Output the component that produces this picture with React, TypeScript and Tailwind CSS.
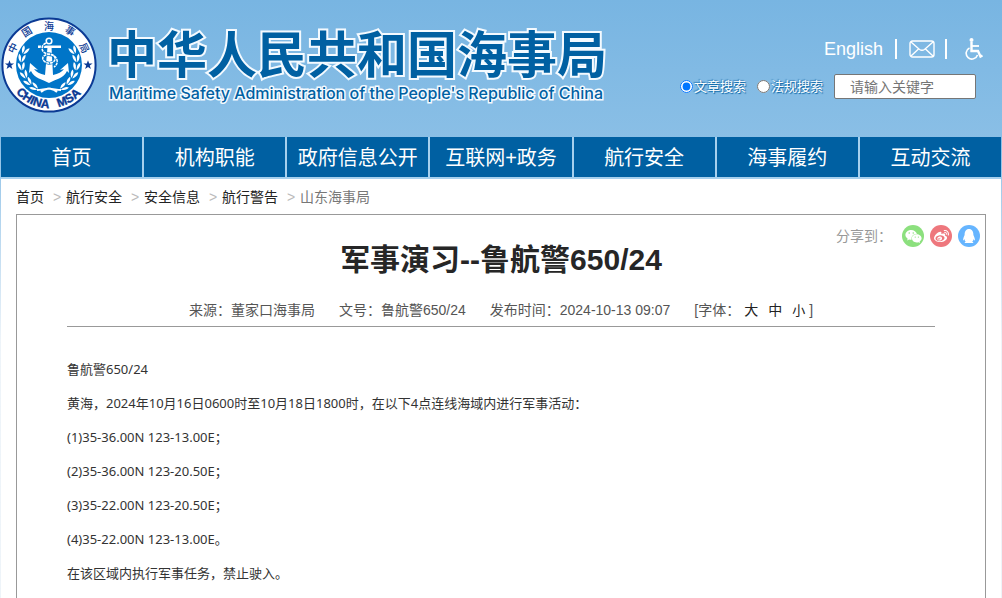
import React, { useState } from 'react';
import { FaQq, FaWeibo, FaWeixin } from 'react-icons/fa';

const navItems = ['首页', '机构职能', '政府信息公开', '互联网+政务', '航行安全', '海事履约', '互动交流'];

const crumbs = ['首页', '航行安全', '安全信息', '航行警告'];

const paragraphs = [
  '鲁航警650/24',
  '黄海，2024年10月16日0600时至10月18日1800时，在以下4点连线海域内进行军事活动：',
  '(1)35-36.00N 123-13.00E；',
  '(2)35-36.00N 123-20.50E；',
  '(3)35-22.00N 123-20.50E；',
  '(4)35-22.00N 123-13.00E。',
  '在该区域内执行军事任务，禁止驶入。',
];

const ringChars = [
  { char: '中', x: 12, y: 31, angle: -64 },
  { char: '国', x: 26, y: 15, angle: -32 },
  { char: '海', x: 48, y: 9, angle: 0 },
  { char: '事', x: 69, y: 14, angle: 32 },
  { char: '局', x: 83, y: 31, angle: 64 },
];

// leaves of one laurel branch, bottom to top
const leaves = [
  { x: 34, y: 70, angle: 32 },
  { x: 28, y: 65, angle: 48 },
  { x: 24, y: 58, angle: 64 },
  { x: 21, y: 50, angle: 82 },
  { x: 21, y: 42, angle: 100 },
  { x: 24, y: 34, angle: 118 },
];

const star = 'M0-4.8 1.2-1.5 4.6-1.5 1.8.6 2.9 3.9 0 1.9-2.9 3.9-1.8.6-4.6-1.5-1.2-1.5Z';

const Branch: React.FC = () => (
  <g fill="#fff">
    {leaves.map(leaf => (
      <g key={leaf.y} transform={`translate(${leaf.x} ${leaf.y}) rotate(${leaf.angle}) scale(.85)`}>
        <path d="M4 0C1-3.8-3-4-5.500-3.200-4-.4-1 .2 4 0Z" />
        <path d="M4 1C1 4.800-3 5-5.500 4.200-4 1.400-1 .8 4 1Z" />
      </g>
    ))}
  </g>
);

const Emblem: React.FC = () => (
  <svg viewBox="0 0 96 96" className="w-24 h-24 shrink-0" role="img" aria-label="中国海事局">
    <circle cx="48" cy="48" r="46.6" fill="#fff" stroke="#0b3a94" strokeWidth="2" />
    <circle cx="48" cy="48" r="33" fill="#0075c8" />
    <Branch />
    <g transform="translate(96 0) scale(-1 1)">
      <Branch />
    </g>
    {/* anchor */}
    <circle cx="48" cy="24" r="2.8" fill="none" stroke="#fff" strokeWidth="1.6" />
    <path d="M37 28.500H60V31H37Z" fill="#fff" />
    <path d="M46.500 30H50.500L52 58C57 57 61 55 63 52L59 53 67 46 68 56 66 54C62 62 55 62 48 66 41 62 34 62 30 54L28 56 29 46 37 53 33 52C35 55 39 57 44 58Z" fill="#fff" />
    <path
      d="M45 26C40 28 40 34 44 36S53 36 54 41 47 48 43 44 45 36 51 38 58 47 53 50"
      fill="none"
      stroke="#0075c8"
      strokeWidth="3"
    />
    <path
      d="M45 26C40 28 40 34 44 36S53 36 54 41 47 48 43 44 45 36 51 38 58 47 53 50"
      fill="none"
      stroke="#fff"
      strokeWidth="1.5"
      strokeDasharray="3 .7"
    />
    <path d="M36 73C43 73 50 69 56 75M60 73C53 73 46 69 40 75" fill="none" stroke="#fff" strokeWidth="1.8" />
    <g fill="#0b3a94">
      <path d={star} transform="translate(8.500 48)" />
      <path d={star} transform="translate(87 48)" />
      {ringChars.map(item => (
        <text
          key={item.char}
          transform={`translate(${item.x} ${item.y}) rotate(${item.angle})`}
          textAnchor="middle"
          dy="3.500"
          className="text-[10px] font-medium font-['Noto_Sans_CJK_SC',sans-serif]"
        >
          {item.char}
        </text>
      ))}
      <path id="emblem-arc" d="M5 48A43 43 0 0 0 91 48" fill="none" />
      <g
        className="text-[12px] font-bold font-['Liberation_Sans',sans-serif]"
        textAnchor="middle"
        stroke="#0b3a94"
        strokeWidth="0.4"
      >
        <text><textPath href="#emblem-arc" startOffset="36%">CHINA</textPath></text>
        <text><textPath href="#emblem-arc" startOffset="67%">MSA</textPath></text>
      </g>
    </g>
  </svg>
);

const MailIcon: React.FC = () => (
  <svg viewBox="0 0 26 18" className="w-[26px] h-[18px]" fill="none" stroke="#fff" strokeWidth="1.4">
    <rect x="1" y="1" width="24" height="16" rx="2.5" />
    <path d="M2 2 10.500 9.500Q13 11 15.500 9.500L24 2M2 16 9.500 9M24 16 16.500 9" />
  </svg>
);

const WheelchairIcon: React.FC = () => (
  <svg viewBox="0 0 18 22" className="w-[18px] h-[22px]" fill="none" stroke="#fff">
    <circle cx="6.500" cy="2" r="2" fill="#fff" stroke="none" />
    <path d="M6.500 4V13H13L15.500 18.500 17.500 17.500" strokeWidth="2.4" />
    <path d="M7 8H14" strokeWidth="1.8" />
    <path d="M4.500 10A5.800 5.800 0 1 0 12.500 17" strokeWidth="1.6" />
  </svg>
);

const SiteHeader: React.FC = () => {
  const [scope, setScope] = useState<string>('article');
  const scopes = [
    { id: 'article', label: '文章搜索' },
    { id: 'law', label: '法规搜索' },
  ];

  return (
    <header className="flex justify-between pt-[17px] pb-6">
      <div className="flex">
        <Emblem />
        <div className="ml-2.5 pt-3 text-[#0060a2] whitespace-nowrap">
          <h1 className="text-[50px] leading-[54px] font-bold [-webkit-text-stroke:4px_#f4faff] [paint-order:stroke_fill]">
            中华人民共和国海事局
          </h1>
          <p className="pl-0.5 text-base leading-5 font-medium font-['Inter','Liberation_Sans',sans-serif] [-webkit-text-stroke:3px_#f4faff] [paint-order:stroke_fill]">
            Maritime Safety Administration of the People's Republic of China
          </p>
        </div>
      </div>

      <div className="flex flex-col items-end gap-[13px] pt-5">
        <div className="flex items-center h-6 pr-[18px] text-white">
          <a href="#english" className="text-lg leading-6 font-['Liberation_Sans',sans-serif]">English</a>
          <span className="w-0.5 h-5 ml-3 mr-3 bg-white" />
          <a href="#mail" aria-label="邮箱"><MailIcon /></a>
          <span className="w-0.5 h-5 ml-2.5 mr-[18px] bg-white" />
          <a href="#accessibility" aria-label="无障碍"><WheelchairIcon /></a>
        </div>

        <form className="flex items-center pr-[25px]" onSubmit={e => e.preventDefault()}>
          {scopes.map(item => (
            <label
              key={item.id}
              className="flex items-center gap-px mr-[11px] text-[13px] leading-6 text-white [text-shadow:1px_1px_1px_#0060a2,-1px_-1px_1px_#3d86bd]"
            >
              <input
                type="radio"
                name="scope"
                className="w-[13px] h-[13px]"
                checked={scope === item.id}
                onChange={() => setScope(item.id)}
              />
              {item.label}
            </label>
          ))}
          <input
            type="text"
            aria-label="请输入关键字"
            placeholder="请输入关键字"
            className="w-[142px] h-[25px] px-[15px] bg-white border border-[#767676] rounded-xs text-sm placeholder:text-[#757575]"
          />
        </form>
      </div>
    </header>
  );
};

const ShareBar: React.FC = () => (
  <div className="flex items-center justify-end pt-2.5 pr-[5px] h-8 text-sm text-[#999]">
    <span className="mr-2.5">分享到：</span>
    <div className="flex gap-1.5 text-white">
      <button type="button" aria-label="微信" className="flex items-center justify-center w-[22px] h-[22px] rounded-full bg-[#8ce07e]">
        <FaWeixin size={17} />
      </button>
      <button type="button" aria-label="微博" className="flex items-center justify-center w-[22px] h-[22px] rounded-full bg-[#ee777d]">
        <FaWeibo size={15} />
      </button>
      <button type="button" aria-label="QQ" className="flex items-center justify-center w-[22px] h-[22px] rounded-full bg-[#66b5ff]">
        <FaQq size={14} />
      </button>
    </div>
  </div>
);

export default function App() {
  return (
    <div className="min-h-screen flex flex-col px-px bg-linear-to-b from-[#78b5e2] from-0% via-[#8abfe6] via-[140px] to-[#eef4f9] to-[340px] font-['Liberation_Sans','Noto_Sans_CJK_SC',sans-serif]">
      <SiteHeader />

      <nav className="grid grid-cols-7 gap-0.5 border-b-2 border-[#a6d0ee] bg-[#a6d0ee]">
        {navItems.map(item => (
          <a key={item} href="#nav" className="h-10 bg-[#0060a2] text-center text-xl leading-[42px] text-white whitespace-nowrap">
            {item}
          </a>
        ))}
      </nav>

      <main className="grow flex flex-col px-[15px] bg-white">
        <div className="flex h-[35px] text-sm leading-9 text-[#222]">
          {crumbs.map(item => (
            <React.Fragment key={item}>
              <a href="#crumb">{item}</a>
              <span className="w-[22px] pl-[9px] text-[#bbb]">&gt;</span>
            </React.Fragment>
          ))}
          <span className="text-[#777]">山东海事局</span>
        </div>

        <article className="grow border border-b-0 border-[#999]">
          <ShareBar />
          <div className="px-[50px]">
            <h2 className="text-center text-[30px] leading-[26px] font-bold text-[#262626]">
              军事演习--鲁航警650/24
            </h2>
            <div className="flex justify-center gap-6 mt-[22px] border-b border-[#999] text-sm leading-[31px] text-[#555]">
              <span>来源：董家口海事局</span>
              <span>文号：鲁航警650/24</span>
              <span>发布时间：2024-10-13 09:07</span>
              <span className="flex">
                [字体：
                <span className="flex gap-2.5 ml-1 mr-1 text-[#222]">
                  <button type="button">大</button>
                  <button type="button">中</button>
                  <button type="button" className="text-[13px]">小</button>
                </span>
                ]
              </span>
            </div>
            <div className="pt-[25px] text-[13px] leading-[34px] text-[#333] font-['Noto_Sans','Noto_Sans_CJK_SC',sans-serif]">
              {paragraphs.map(text => (
                <p key={text}>{text}</p>
              ))}
            </div>
          </div>
        </article>
      </main>
    </div>
  );
}
